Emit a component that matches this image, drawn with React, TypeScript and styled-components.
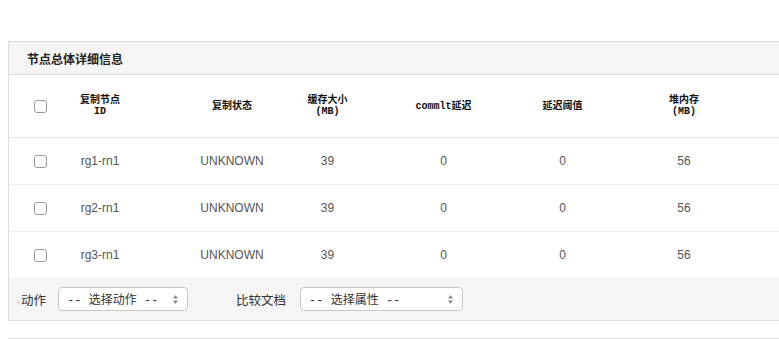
import React from "react";
import styled, { createGlobalStyle } from "styled-components";

const GlobalStyle = createGlobalStyle`
  html, body {
    margin: 0;
    padding: 0;
    background: #fff;
    overflow: hidden;
    height: 339px;
  }
  body {
    font-family: "Liberation Sans", "Noto Sans CJK SC", sans-serif;
    color: #333;
  }
`;

const Page = styled.main`
  padding: 41px 0 0 8px;
  display: flex;
  flex-direction: column;
`;

const Panel = styled.section`
  border-top: 1px solid #dddddd;
  border-bottom: 1px solid #dddddd;
  border-left: 1px solid #dddddd;
  background: #fff;
`;

const NextPanel = styled.section`
  margin-top: 17px;
  height: 0;
  border-top: 1px solid #dddddd;
`;

const Heading = styled.header`
  height: 32px;
  display: flex;
  align-items: center;
  padding: 0 18px;
  background: #f5f5f5;
  border-bottom: 1px solid #dddddd;
  font-family: "Noto Sans CJK SC", sans-serif;
  font-size: 12px;
  font-weight: bold;
  color: #222;
`;

const Row = styled.div<{ $height: number; $line?: string }>`
  display: grid;
  grid-template-columns: 61px 96px 114px 105px 117px 121px 122px 1fr;
  height: ${(p) => p.$height}px;
  border-bottom: ${(p) => (p.$line ? `1px solid ${p.$line}` : "none")};
  align-items: center;
`;

const Cell = styled.div<{ $shift: number; $head?: boolean }>`
  box-sizing: border-box;
  display: flex;
  flex-direction: column;
  align-items: center;
  justify-content: center;
  text-align: center;
  padding-left: ${(p) => (p.$shift > 0 ? p.$shift * 2 : 0)}px;
  padding-right: ${(p) => (p.$shift < 0 ? -p.$shift * 2 : 0)}px;
  font-family: ${(p) =>
    p.$head
      ? `"Liberation Mono", "Noto Sans CJK SC", monospace`
      : `"Liberation Sans", "Noto Sans CJK SC", sans-serif`};
  font-size: ${(p) => (p.$head ? 10 : 12)}px;
  font-weight: ${(p) => (p.$head ? "bold" : "normal")};
  line-height: ${(p) => (p.$head ? "11px" : "14px")};
  color: ${(p) => (p.$head ? "#111" : "#555")};
  white-space: nowrap;
`;

const Box = styled.span`
  display: inline-block;
  width: 11px;
  height: 11px;
  border: 1px solid #9a9a9a;
  border-radius: 3px;
  background: #fff;
`;

const Footer = styled.div`
  height: 42px;
  display: flex;
  align-items: center;
  background: #f5f5f5;
  padding-left: 8px;
  font-family: "Noto Sans CJK SC", sans-serif;
  font-size: 12.5px;
  color: #333;
`;

const Label = styled.span<{ $gap: number }>`
  margin-right: ${(p) => p.$gap}px;
`;

const Dot = styled.span`
  font-family: "Liberation Sans", sans-serif;
  font-size: 11px;
  color: #888;
  margin-right: 1px;
`;

const SelectBox = styled.div<{ $width: number; $after: number }>`
  box-sizing: border-box;
  width: ${(p) => p.$width}px;
  height: 24px;
  margin-right: ${(p) => p.$after}px;
  display: flex;
  align-items: center;
  justify-content: space-between;
  padding: 0 8px 0 8px;
  background: #fff;
  border: 1px solid #c8c8c8;
  border-radius: 4px;
  font-family: "Liberation Mono", "Noto Sans CJK SC", monospace;
  font-size: 12px;
  color: #333;
  white-space: pre;
`;

const Arrows = () => (
  <svg width="7" height="11" viewBox="0 0 7 11">
    <path d="M3.5 1 L6 4.5 L1 4.5 Z" fill="#8a8a8a" />
    <path d="M3.5 10 L6 6.5 L1 6.5 Z" fill="#8a8a8a" />
  </svg>
);

const shifts = [1, -18, 9, -5, 0, 0, 0, 0];

const headers: string[][] = [
  [],
  ["复制节点", "ID"],
  ["复制状态"],
  ["缓存大小", "(MB)"],
  ["commlt延迟"],
  ["延迟阈值"],
  ["堆内存", "(MB)"],
  [],
];

const rows = [
  ["rg1-rn1", "UNKNOWN", "39", "0", "0", "56"],
  ["rg2-rn1", "UNKNOWN", "39", "0", "0", "56"],
  ["rg3-rn1", "UNKNOWN", "39", "0", "0", "56"],
];

export default function App() {
  return (
    <Page>
      <GlobalStyle />
      <Panel>
        <Heading>节点总体详细信息</Heading>
        <Row $height={62} $line="#e6e6e6">
          {headers.map((lines, i) => (
            <Cell key={i} $shift={shifts[i]} $head>
              {i === 0 ? <Box /> : lines.map((l) => <span key={l}>{l}</span>)}
            </Cell>
          ))}
        </Row>
        {rows.map((r, ri) => (
          <Row
            key={ri}
            $height={46}
            $line={ri === rows.length - 1 ? undefined : "#eeeeee"}
          >
            <Cell $shift={shifts[0]}>
              <Box />
            </Cell>
            {r.map((v, ci) => (
              <Cell key={ci} $shift={shifts[ci + 1]}>
                {v}
              </Cell>
            ))}
            <Cell $shift={0} />
          </Row>
        ))}
        <Footer>
          <Dot>.</Dot>
          <Label $gap={12}>动作</Label>
          <SelectBox $width={130} $after={48}>
            <span>-- 选择动作 --</span>
            <Arrows />
          </SelectBox>
          <Label $gap={14}>比较文档</Label>
          <SelectBox $width={163} $after={0}>
            <span>-- 选择属性 --</span>
            <Arrows />
          </SelectBox>
        </Footer>
      </Panel>
      <NextPanel />
    </Page>
  );
}
